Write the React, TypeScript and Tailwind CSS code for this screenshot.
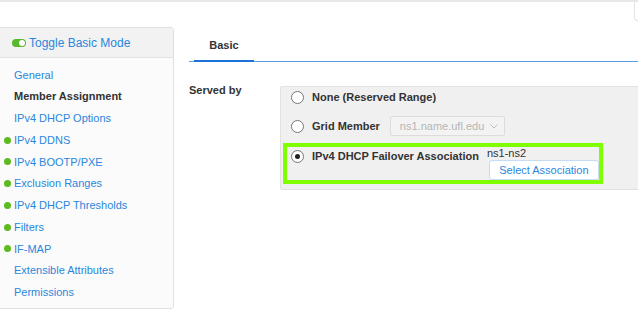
import React from "react";

const menu: { label: string; dot?: boolean; active?: boolean }[] = [
  { label: "General" },
  { label: "Member Assignment", active: true },
  { label: "IPv4 DHCP Options" },
  { label: "IPv4 DDNS", dot: true },
  { label: "IPv4 BOOTP/PXE", dot: true },
  { label: "Exclusion Ranges", dot: true },
  { label: "IPv4 DHCP Thresholds", dot: true },
  { label: "Filters", dot: true },
  { label: "IF-MAP", dot: true },
  { label: "Extensible Attributes" },
  { label: "Permissions" },
];

function Radio({ checked }: { checked?: boolean }) {
  return (
    <span className="w-[13px] h-[13px] rounded-full border border-[#767676] bg-white flex items-center justify-center shrink-0">
      {checked && <span className="w-[5px] h-[5px] rounded-full bg-[#222]" />}
    </span>
  );
}

export default function App() {
  return (
    <div
      className="w-[638px] h-[312px] bg-white overflow-hidden relative text-[11px] text-[#333]"
      style={{ fontFamily: '"Liberation Sans", Arial, sans-serif' }}
    >
      <div className="h-[2px] bg-[#e8e8e8]" />
      <div className="absolute right-0 top-0 w-[4px] h-[21px] border-l border-b border-[#e3e3e3] rounded-bl-sm" />
      <div className="flex mt-[25px]">
        {/* sidebar */}
        <aside className="-ml-[10px] w-[184px] h-[282px] border border-[#e0e0e0] rounded-[3px] bg-[#fbfbfb] shrink-0">
          <div className="h-[30px] bg-[#f2f2f2] border-b border-[#e2e2e2] flex items-center pl-[21px] text-[12px] text-[#2a86de]">
            <span className="w-[14px] h-[8px] rounded-full bg-[#56b82a] flex items-center justify-end pr-[1px] mr-[3px]">
              <span className="w-[6px] h-[6px] rounded-full bg-white" />
            </span>
            Toggle Basic Mode
          </div>
          <ul className="pt-[6px]">
            {menu.map((m) => (
              <li key={m.label} className="h-[21.75px] flex items-center relative pl-[23px]">
                {m.dot && (
                  <span className="absolute left-[13px] w-[7px] h-[7px] rounded-full bg-[#5cbb1e]" />
                )}
                <span
                  className={
                    m.active ? "font-bold text-[#333]" : "text-[#2a86de]"
                  }
                >
                  {m.label}
                </span>
              </li>
            ))}
          </ul>
        </aside>

        {/* main */}
        <main className="flex-1 ml-[15px]">
          <div className="border-b border-[#5b9ee6] flex">
            <div className="ml-[5px] w-[60px] h-[35px] pt-[3px] border-b-2 border-[#1a73d9] -mb-[1px] flex items-center justify-center font-bold text-[#333]">
              Basic
            </div>
          </div>
          <div className="flex mt-[24px]">
            <div className="w-[91px] -mt-[4px] font-bold text-[#333] shrink-0">Served by</div>
            <div className="flex-1 -mr-[10px] h-[104px] bg-[#f0f0f0] border border-[#e2e2e2] rounded-[2px] pl-[2px] pt-[3px]">
              <div className="flex items-center gap-[8px] pl-[8px] h-[14px] font-bold whitespace-nowrap">
                <Radio />
                None (Reserved Range)
              </div>
              <div className="flex items-center pl-[8px] h-[20px] mt-[12px] font-bold whitespace-nowrap">
                <Radio />
                <span className="ml-[8px]">Grid Member</span>
                <div className="ml-[10px] w-[115px] h-[20px] border border-[#dcdcdc] bg-[#f3f3f3] rounded-[2px] flex items-center justify-between pl-[9px] pr-[6px] font-normal text-[#b5b5b5]">
                  ns1.name.ufl.edu
                  <svg width="8" height="5" viewBox="0 0 8 5" fill="none">
                    <path d="M0.5 0.5 L4 4 L7.5 0.5" stroke="#bdbdbd" strokeWidth="1" />
                  </svg>
                </div>
              </div>
              <div className="mt-[7px] w-[320px] h-[41px] border-[4px] border-[#80ff00] flex pl-[4px] whitespace-nowrap">
                <div className="flex items-center gap-[8px] h-[12px] mt-[3px] font-bold">
                  <Radio checked />
                  IPv4 DHCP Failover Association
                </div>
                <div className="ml-[8px] flex flex-col">
                  <span className="leading-[12px] mt-[0px] text-[#333]">ns1-ns2</span>
                  <button className="ml-[2px] mt-[1px] w-[110px] h-[20px] bg-white border border-[#c5dcf3] rounded-[3px] text-[#2a86de] text-[11px]">
                    Select Association
                  </button>
                </div>
              </div>
            </div>
          </div>
        </main>
      </div>
    </div>
  );
}
